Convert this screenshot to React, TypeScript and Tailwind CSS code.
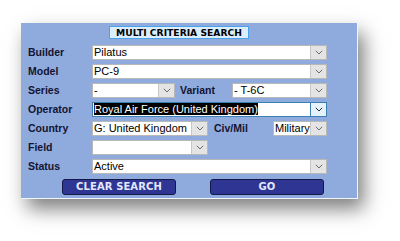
import React from 'react';

const Chevron: React.FC<{ color?: string }> = ({ color = '#6b6b6b' }) => (
  <svg width="8" height="5" viewBox="0 0 8 5" fill="none">
    <path d="M0.8 0.8 L4 4 L7.2 0.8" stroke={color} strokeWidth="1" />
  </svg>
);

const Select: React.FC<{ value: string; width: string; focused?: boolean }> = ({ value, width, focused }) => (
  <div
    className={`flex h-[15px] bg-white border ${focused ? 'border-[#3c7fb1]' : 'border-[#b8b8b8]'} ${width}`}
  >
    <div className="flex-1 overflow-hidden whitespace-nowrap pl-[1px] text-[11px] leading-[13px] text-black">
      {focused ? <span className="bg-black text-white">{value}</span> : value}
    </div>
    <div
      className={`flex w-[16px] items-center justify-center border-l ${
        focused ? 'bg-[#e5f1fb] border-[#3c7fb1]' : 'bg-[#e4e4e4] border-[#c8c8c8]'
      }`}
    >
      <Chevron color={focused ? '#2a2a2a' : '#6b6b6b'} />
    </div>
  </div>
);

const Label: React.FC<{ children: React.ReactNode; w?: string }> = ({ children, w = 'w-[71px] pl-[7px]' }) => (
  <div className={`${w} text-[10.5px] font-bold leading-[15px] text-[#141432]`}>{children}</div>
);

const Button: React.FC<{ label: string; className?: string }> = ({ label, className }) => (
  <button
    className={`block h-[16px] w-[114px] rounded-[3px] border border-[#141848] bg-[#2e3592] font-['DejaVu_Sans',sans-serif] text-[10px] font-bold leading-[14px] tracking-[0.1px] text-[#e2e8ff] ${className ?? ''}`}
  >
    {label}
  </button>
);

export default function App() {
  return (
    <div className="h-[241px] w-[400px] bg-white pl-[21px] pt-[23px] font-['Liberation_Sans',Arial,sans-serif]">
      <div className="flex h-[176px] w-[337px] flex-col border-b border-r border-[#f2f5fb] bg-[#8faadc] pt-[3px] shadow-[6px_10px_18px_rgba(0,0,0,0.5)]">
        <div className="ml-[88px] flex h-[13px] w-[140px] items-center justify-center border border-[#4aa3e6] bg-[#dceefb] font-['DejaVu_Sans',sans-serif] text-[9.2px] font-bold text-black">
          MULTI CRITERIA SEARCH
        </div>

        <div className="mt-[6px] flex flex-col gap-[4px]">
          <div className="flex items-center">
            <Label>Builder</Label>
            <Select value="Pilatus" width="w-[235px]" />
          </div>
          <div className="flex items-center">
            <Label>Model</Label>
            <Select value="PC-9" width="w-[235px]" />
          </div>
          <div className="flex items-center">
            <Label>Series</Label>
            <Select value="-" width="w-[83px]" />
            <Label w="w-[57px] pl-[5px]">Variant</Label>
            <Select value="- T-6C" width="w-[95px]" />
          </div>
          <div className="flex items-center">
            <Label>Operator</Label>
            <Select value="Royal Air Force (United Kingdom)" width="w-[235px]" focused />
          </div>
          <div className="flex items-center">
            <Label>Country</Label>
            <Select value="G: United Kingdom" width="w-[116px]" />
            <Label w="w-[65px] pl-[6px]">Civ/Mil</Label>
            <Select value="Military" width="w-[54px]" />
          </div>
          <div className="flex items-center">
            <Label>Field</Label>
            <Select value="" width="w-[116px]" />
          </div>
          <div className="flex items-center">
            <Label>Status</Label>
            <Select value="Active" width="w-[235px]" />
          </div>
        </div>

        <div className="mt-[5px] flex">
          <Button label="CLEAR SEARCH" className="ml-[41px]" />
          <Button label="GO" className="ml-[34px]" />
        </div>
      </div>
    </div>
  );
}
